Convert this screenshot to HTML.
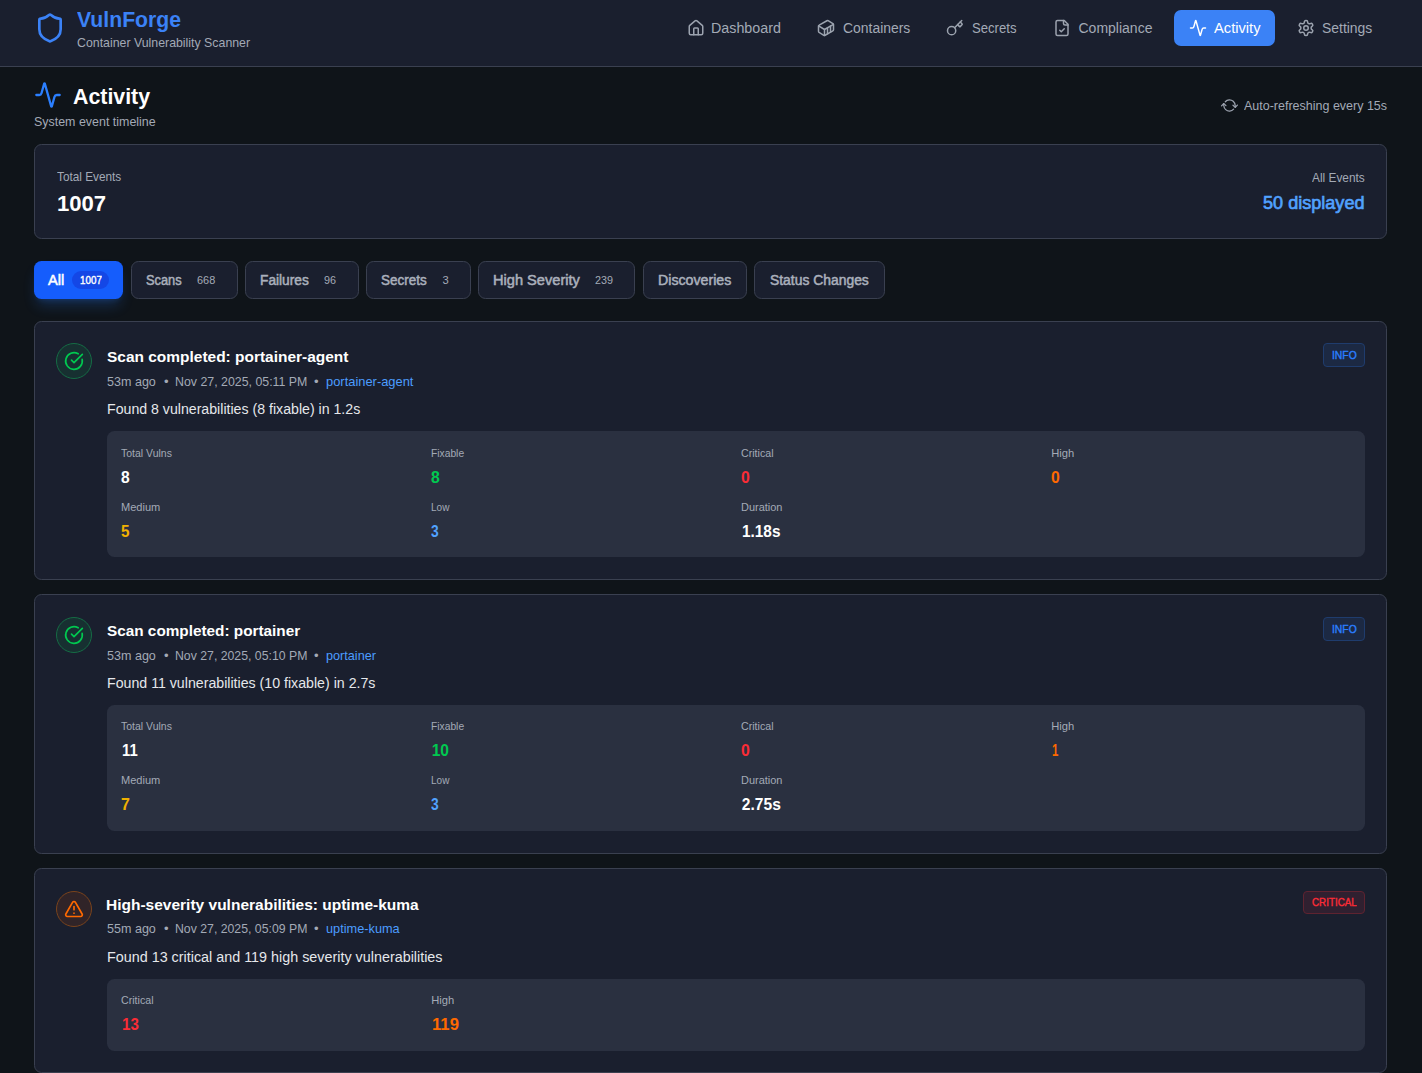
<!DOCTYPE html>
<html lang="en"><head><meta charset="utf-8"><title>VulnForge - Activity</title>
<style>
html,body{margin:0;padding:0}
html{width:1422px;height:1073px;overflow:hidden;background:#0f1419}
body{width:1422px;height:1073px;overflow:hidden;position:relative;background:#0f1419;font-family:"Liberation Sans",sans-serif}
.page{position:absolute;left:0;top:0;width:1422px;height:1073px;overflow:hidden;background:#0f1419}
.b{position:absolute;box-sizing:border-box}
.t{position:absolute;margin:0;padding:0;white-space:pre;line-height:1;font-weight:400;font-style:normal;text-decoration:none;transform-origin:0 0}
.ic{position:absolute;display:block;overflow:visible}
</style></head>
<body>
<div class="page">
<header class="app-header">
<div class="b" style="left:0px;top:0px;width:1422px;height:66px;background:#1a1f2e;border-bottom:1px solid #3a4050;box-sizing:content-box"></div>
<svg class="ic" style="left:34px;top:12px" width="32" height="32" viewBox="0 0 24 24" fill="none" stroke="#3b82f6" stroke-width="2" stroke-linecap="round" stroke-linejoin="round"><path d="M20 13c0 5-3.5 7.5-7.66 8.95a1 1 0 0 1-.67-.01C7.5 20.5 4 18 4 13V6a1 1 0 0 1 1-1c2 0 4.5-1.2 6.24-2.72a1.17 1.17 0 0 1 1.52 0C14.51 3.81 17 5 19 5a1 1 0 0 1 1 1z"/></svg>
<h1 class="t" style="left:77.30px;top:8.60px;font-size:22.4px;color:#3b82f6;font-weight:700;transform:scaleX(0.9468);">VulnForge</h1>
<p class="t" style="left:77.30px;top:36.10px;font-size:13.07px;color:#a3aab6;transform:scaleX(0.9447);">Container Vulnerability Scanner</p>
</header>
<nav class="main-nav">
<div class="b" style="left:1174px;top:10px;width:101px;height:36px;background:#3b82f6;border-radius:7px"></div>
<svg class="ic" style="left:686.7px;top:19px" width="18" height="18" viewBox="0 0 24 24" fill="none" stroke="#9ca3af" stroke-width="2" stroke-linecap="round" stroke-linejoin="round"><path d="M15 21v-8a1 1 0 0 0-1-1h-4a1 1 0 0 0-1 1v8"/><path d="M3 10a2 2 0 0 1 .709-1.528l7-5.999a2 2 0 0 1 2.582 0l7 5.999A2 2 0 0 1 21 10v9a2 2 0 0 1-2 2H5a2 2 0 0 1-2-2z"/></svg>
<svg class="ic" style="left:816.8px;top:19px" width="18" height="18" viewBox="0 0 24 24" fill="none" stroke="#9ca3af" stroke-width="2" stroke-linecap="round" stroke-linejoin="round"><path d="M22 7.7c0-.6-.4-1.2-.8-1.5l-6.3-3.9a1.72 1.72 0 0 0-1.7 0l-10.3 6c-.5.2-.9.8-.9 1.400v6.600c0 .5.4 1.200.8 1.500l6.300 3.900a1.720 1.720 0 0 0 1.700 0l10.300-6c.5-.3.9-1 .9-1.500Z"/><path d="M10 21.900V14L2.100 9.100"/><path d="m10 14 11.900-6.900"/><path d="M14 19.800v-8.100"/><path d="M18 17.500V9.400"/></svg>
<svg class="ic" style="left:946px;top:19px" width="18" height="18" viewBox="0 0 24 24" fill="none" stroke="#9ca3af" stroke-width="2" stroke-linecap="round" stroke-linejoin="round"><path d="m15.500 7.500 2.300 2.300a1 1 0 0 0 1.400 0l2.100-2.100a1 1 0 0 0 0-1.400L19 4"/><path d="m21 2-9.600 9.600"/><circle cx="7.500" cy="15.500" r="5.500"/></svg>
<svg class="ic" style="left:1052.5px;top:19px" width="18" height="18" viewBox="0 0 24 24" fill="none" stroke="#9ca3af" stroke-width="2" stroke-linecap="round" stroke-linejoin="round"><path d="M15 2H6a2 2 0 0 0-2 2v16a2 2 0 0 0 2 2h12a2 2 0 0 0 2-2V7Z"/><path d="M14 2v4a2 2 0 0 0 2 2h4"/><path d="m9 15 2 2 4-4"/></svg>
<svg class="ic" style="left:1189.3px;top:19px" width="18" height="18" viewBox="0 0 24 24" fill="none" stroke="#ffffff" stroke-width="2" stroke-linecap="round" stroke-linejoin="round"><path d="M22 12h-2.480a2 2 0 0 0-1.930 1.460l-2.350 8.360a.25.25 0 0 1-.480 0L9.240 2.180a.25.25 0 0 0-.480 0l-2.350 8.360A2 2 0 0 1 4.490 12H2"/></svg>
<svg class="ic" style="left:1297.4px;top:19px" width="18" height="18" viewBox="0 0 24 24" fill="none" stroke="#9ca3af" stroke-width="2" stroke-linecap="round" stroke-linejoin="round"><path d="M12.220 2h-.440a2 2 0 0 0-2 2v.180a2 2 0 0 1-1 1.730l-.430.250a2 2 0 0 1-2 0l-.150-.080a2 2 0 0 0-2.730.730l-.220.380a2 2 0 0 0 .730 2.730l.150.100a2 2 0 0 1 1 1.720v.510a2 2 0 0 1-1 1.740l-.150.090a2 2 0 0 0-.730 2.730l.220.380a2 2 0 0 0 2.730.730l.150-.080a2 2 0 0 1 2 0l.430.250a2 2 0 0 1 1 1.730V20a2 2 0 0 0 2 2h.440a2 2 0 0 0 2-2v-.180a2 2 0 0 1 1-1.730l.430-.250a2 2 0 0 1 2 0l.150.080a2 2 0 0 0 2.730-.730l.220-.390a2 2 0 0 0-.730-2.730l-.150-.080a2 2 0 0 1-1-1.740v-.500a2 2 0 0 1 1-1.740l.150-.090a2 2 0 0 0 .730-2.730l-.220-.380a2 2 0 0 0-2.730-.730l-.150.080a2 2 0 0 1-2 0l-.430-.250a2 2 0 0 1-1-1.730V4a2 2 0 0 0-2-2z"/><circle cx="12" cy="12" r="3"/></svg>
<a class="t" style="left:711.48px;top:21.20px;font-size:14px;color:#a3aab6;transform:scaleX(1.0209);">Dashboard</a>
<a class="t" style="left:842.70px;top:21.20px;font-size:14px;color:#a3aab6;transform:scaleX(0.9940);">Containers</a>
<a class="t" style="left:971.80px;top:21.20px;font-size:14px;color:#a3aab6;transform:scaleX(0.9376);">Secrets</a>
<a class="t" style="left:1078.50px;top:21.20px;font-size:14px;color:#a3aab6;">Compliance</a>
<a class="t" style="left:1214.30px;top:21.20px;font-size:14px;color:#ffffff;transform:scaleX(1.0488);">Activity</a>
<a class="t" style="left:1322.40px;top:21.20px;font-size:14px;color:#a3aab6;transform:scaleX(0.9943);">Settings</a>
</nav>
<main>
<section class="page-title">
<svg class="ic" style="left:34px;top:81px" width="28" height="28" viewBox="0 0 24 24" fill="none" stroke="#2b7fff" stroke-width="2" stroke-linecap="round" stroke-linejoin="round"><path d="M22 12h-2.480a2 2 0 0 0-1.930 1.460l-2.350 8.360a.25.25 0 0 1-.480 0L9.240 2.180a.25.25 0 0 0-.480 0l-2.350 8.360A2 2 0 0 1 4.490 12H2"/></svg>
<svg class="ic" style="transform:rotate(42deg);left:1221.8px;top:97.8px" width="14.93" height="14.93" viewBox="0 0 24 24" fill="none" stroke="#9ca3af" stroke-width="2" stroke-linecap="round" stroke-linejoin="round"><path d="M3 12a9 9 0 0 1 9-9 9.750 9.750 0 0 1 6.740 2.740L21 8"/><path d="M21 3v5h-5"/><path d="M21 12a9 9 0 0 1-9 9 9.750 9.750 0 0 1-6.740-2.740L3 16"/><path d="M8 16H3v5"/></svg>
<h2 class="t" style="left:73.40px;top:85.90px;font-size:22.4px;color:#ffffff;font-weight:700;transform:scaleX(0.9530);">Activity</h2>
<p class="t" style="left:34.10px;top:115.10px;font-size:13.07px;color:#a3aab6;transform:scaleX(0.9521);">System event timeline</p>
<span class="t" style="left:1243.90px;top:99.40px;font-size:13.07px;color:#a3aab6;transform:scaleX(0.9564);">Auto-refreshing every 15s</span>
</section>
<section class="stats-card">
<div class="b" style="left:34px;top:144px;width:1353px;height:95px;background:#1a1f2e;border:1px solid #3a4050;border-radius:7.5px"></div>
<p class="t" style="left:57.10px;top:170.00px;font-size:13.07px;color:#a3aab6;transform:scaleX(0.9033);">Total Events</p>
<p class="t" style="left:57.01px;top:192.90px;font-size:22.4px;color:#ffffff;font-weight:700;transform:scaleX(0.9864);">1007</p>
<p class="t" style="left:1311.60px;top:171.10px;font-size:13.07px;color:#a3aab6;transform:scaleX(0.9086);">All Events</p>
<p class="t" style="left:1262.83px;top:194.10px;font-size:18.67px;color:#51a2ff;-webkit-text-stroke:0.67px #51a2ff;transform:scaleX(0.9690);">50 displayed</p>
</section>
<section class="filters">
<div class="b" style="left:34px;top:261px;width:89px;height:38px;background:#155dfc;border-radius:7.5px;box-shadow:0 9px 14px -3px rgba(43,127,255,.24),0 4px 6px -4px rgba(43,127,255,.24)"></div>
<div class="b" style="left:72px;top:271px;width:37px;height:18px;background:#1447e6;border-radius:9px"></div>
<div class="b" style="left:131px;top:261px;width:107px;height:38px;background:#1a1f2e;border:1px solid #3a4050;border-radius:7.5px"></div>
<div class="b" style="left:245px;top:261px;width:114px;height:38px;background:#1a1f2e;border:1px solid #3a4050;border-radius:7.5px"></div>
<div class="b" style="left:366px;top:261px;width:105px;height:38px;background:#1a1f2e;border:1px solid #3a4050;border-radius:7.5px"></div>
<div class="b" style="left:478px;top:261px;width:157px;height:38px;background:#1a1f2e;border:1px solid #3a4050;border-radius:7.5px"></div>
<div class="b" style="left:643px;top:261px;width:104px;height:38px;background:#1a1f2e;border:1px solid #3a4050;border-radius:7.5px"></div>
<div class="b" style="left:754px;top:261px;width:131px;height:38px;background:#1a1f2e;border:1px solid #3a4050;border-radius:7.5px"></div>
<span class="t" style="left:48.46px;top:273.70px;font-size:13.8px;color:#ffffff;-webkit-text-stroke:0.50px #ffffff;transform:scaleX(1.0593);">All</span>
<span class="t" style="left:80.08px;top:275.00px;font-size:11.2px;color:#ffffff;-webkit-text-stroke:0.40px #ffffff;transform:scaleX(0.8776);">1007</span>
<span class="t" style="left:146.43px;top:273.70px;font-size:13.8px;color:#aab0bc;-webkit-text-stroke:0.50px #aab0bc;transform:scaleX(0.9295);">Scans</span>
<span class="t" style="left:197.10px;top:275.00px;font-size:11.2px;color:#a3aab6;transform:scaleX(0.9759);">668</span>
<span class="t" style="left:259.85px;top:273.70px;font-size:13.8px;color:#aab0bc;-webkit-text-stroke:0.50px #aab0bc;transform:scaleX(0.9945);">Failures</span>
<span class="t" style="left:324.20px;top:275.00px;font-size:11.2px;color:#a3aab6;transform:scaleX(0.9655);">96</span>
<span class="t" style="left:381.24px;top:273.70px;font-size:13.8px;color:#aab0bc;-webkit-text-stroke:0.50px #aab0bc;transform:scaleX(0.9753);">Secrets</span>
<span class="t" style="left:442.40px;top:275.00px;font-size:11.2px;color:#a3aab6;">3</span>
<span class="t" style="left:493.10px;top:273.70px;font-size:13.8px;color:#aab0bc;-webkit-text-stroke:0.50px #aab0bc;transform:scaleX(1.0595);">High Severity</span>
<span class="t" style="left:594.90px;top:275.00px;font-size:11.2px;color:#a3aab6;transform:scaleX(0.9651);">239</span>
<span class="t" style="left:657.63px;top:273.70px;font-size:13.8px;color:#aab0bc;-webkit-text-stroke:0.50px #aab0bc;transform:scaleX(1.0282);">Discoveries</span>
<span class="t" style="left:769.95px;top:273.70px;font-size:13.8px;color:#aab0bc;-webkit-text-stroke:0.50px #aab0bc;transform:scaleX(1.0063);">Status Changes</span>
</section>
<article class="event">
<div class="b" style="left:34px;top:321px;width:1353px;height:259px;background:#1a1f2e;border:1px solid #3a4050;border-radius:7.5px"></div>
<div class="b" style="left:56px;top:343px;width:36px;height:36px;background:#173031;border:1px solid #156c45;border-radius:50%"></div>
<div class="b" style="left:107px;top:431px;width:1258px;height:126px;background:#2a3040;border-radius:7.5px"></div>
<div class="b" style="left:1323px;top:343px;width:42px;height:24px;background:#1c2943;border:1px solid #1f3c6d;border-radius:4px"></div>
<svg class="ic" style="left:64px;top:351px" width="20" height="20" viewBox="0 0 24 24" fill="none" stroke="#00c950" stroke-width="2" stroke-linecap="round" stroke-linejoin="round"><path d="M21.801 10A10 10 0 1 1 17 3.335"/><path d="m9 11 3 3L22 4"/></svg>
<h3 class="t" style="left:107.10px;top:350.00px;font-size:14.93px;color:#ffffff;font-weight:700;transform:scaleX(1.0364);">Scan completed: portainer-agent</h3>
<span class="t" style="left:107.10px;top:375.30px;font-size:13.07px;color:#a3aab6;transform:scaleX(0.9611);">53m ago</span>
<span class="t" style="left:163.90px;top:375.30px;font-size:13.07px;color:#a3aab6;">•</span>
<span class="t" style="left:174.75px;top:375.30px;font-size:13.07px;color:#a3aab6;transform:scaleX(0.9462);">Nov 27, 2025, 05:11 PM</span>
<span class="t" style="left:314.10px;top:375.30px;font-size:13.07px;color:#a3aab6;">•</span>
<a class="t" style="left:326.10px;top:375.30px;font-size:13.07px;color:#4c9dff;transform:scaleX(0.9869);">portainer-agent</a>
<p class="t" style="left:106.79px;top:401.90px;font-size:14px;color:#e5e7eb;transform:scaleX(1.0105);">Found 8 vulnerabilities (8 fixable) in 1.2s</p>
<span class="t" style="left:1331.86px;top:350.00px;font-size:11.2px;color:#2b7fff;-webkit-text-stroke:0.40px #2b7fff;transform:scaleX(0.9234);">INFO</span>
<span class="t" style="left:121.20px;top:448.00px;font-size:11.2px;color:#a3aab6;transform:scaleX(0.9376);">Total Vulns</span>
<span class="t" style="left:121.00px;top:470.00px;font-size:15.6px;color:#ffffff;font-weight:700;">8</span>
<span class="t" style="left:431.20px;top:448.00px;font-size:11.2px;color:#a3aab6;transform:scaleX(0.9179);">Fixable</span>
<span class="t" style="left:431.20px;top:470.00px;font-size:15.6px;color:#00c950;font-weight:700;transform:scaleX(1.0111);">8</span>
<span class="t" style="left:741.20px;top:448.00px;font-size:11.2px;color:#a3aab6;transform:scaleX(0.9525);">Critical</span>
<span class="t" style="left:741.20px;top:470.00px;font-size:15.6px;color:#fb2c36;font-weight:700;transform:scaleX(1.0111);">0</span>
<span class="t" style="left:1051.20px;top:448.00px;font-size:11.2px;color:#a3aab6;">High</span>
<span class="t" style="left:1051.20px;top:470.00px;font-size:15.6px;color:#ff6900;font-weight:700;transform:scaleX(1.0111);">0</span>
<span class="t" style="left:121.20px;top:502.00px;font-size:11.2px;color:#a3aab6;transform:scaleX(0.9881);">Medium</span>
<span class="t" style="left:121.20px;top:524.00px;font-size:15.6px;color:#f0b100;font-weight:700;transform:scaleX(0.9778);">5</span>
<span class="t" style="left:431.20px;top:502.00px;font-size:11.2px;color:#a3aab6;transform:scaleX(0.8954);">Low</span>
<span class="t" style="left:431.20px;top:524.00px;font-size:15.6px;color:#51a2ff;font-weight:700;transform:scaleX(0.8889);">3</span>
<span class="t" style="left:741.20px;top:502.00px;font-size:11.2px;color:#a3aab6;transform:scaleX(0.9795);">Duration</span>
<span class="t" style="left:741.80px;top:524.00px;font-size:15.6px;color:#ffffff;font-weight:700;transform:scaleX(0.9860);">1.18s</span>
</article>
<article class="event">
<div class="b" style="left:34px;top:594px;width:1353px;height:260px;background:#1a1f2e;border:1px solid #3a4050;border-radius:7.5px"></div>
<div class="b" style="left:56px;top:617px;width:36px;height:36px;background:#173031;border:1px solid #156c45;border-radius:50%"></div>
<div class="b" style="left:107px;top:705px;width:1258px;height:126px;background:#2a3040;border-radius:7.5px"></div>
<div class="b" style="left:1323px;top:617px;width:42px;height:24px;background:#1c2943;border:1px solid #1f3c6d;border-radius:4px"></div>
<svg class="ic" style="left:64px;top:625px" width="20" height="20" viewBox="0 0 24 24" fill="none" stroke="#00c950" stroke-width="2" stroke-linecap="round" stroke-linejoin="round"><path d="M21.801 10A10 10 0 1 1 17 3.335"/><path d="m9 11 3 3L22 4"/></svg>
<h3 class="t" style="left:107.10px;top:623.80px;font-size:14.93px;color:#ffffff;font-weight:700;transform:scaleX(1.0265);">Scan completed: portainer</h3>
<span class="t" style="left:107.10px;top:649.10px;font-size:13.07px;color:#a3aab6;transform:scaleX(0.9611);">53m ago</span>
<span class="t" style="left:163.90px;top:649.10px;font-size:13.07px;color:#a3aab6;">•</span>
<span class="t" style="left:174.76px;top:649.10px;font-size:13.07px;color:#a3aab6;transform:scaleX(0.9396);">Nov 27, 2025, 05:10 PM</span>
<span class="t" style="left:314.10px;top:649.10px;font-size:13.07px;color:#a3aab6;">•</span>
<a class="t" style="left:326.10px;top:649.10px;font-size:13.07px;color:#4c9dff;transform:scaleX(0.9693);">portainer</a>
<p class="t" style="left:106.79px;top:676.00px;font-size:14px;color:#e5e7eb;transform:scaleX(1.0125);">Found 11 vulnerabilities (10 fixable) in 2.7s</p>
<span class="t" style="left:1331.86px;top:624.00px;font-size:11.2px;color:#2b7fff;-webkit-text-stroke:0.40px #2b7fff;transform:scaleX(0.9234);">INFO</span>
<span class="t" style="left:121.20px;top:721.00px;font-size:11.2px;color:#a3aab6;transform:scaleX(0.9376);">Total Vulns</span>
<span class="t" style="left:121.80px;top:743.00px;font-size:15.6px;color:#ffffff;font-weight:700;transform:scaleX(0.9517);">11</span>
<span class="t" style="left:431.20px;top:721.00px;font-size:11.2px;color:#a3aab6;transform:scaleX(0.9179);">Fixable</span>
<span class="t" style="left:431.70px;top:743.00px;font-size:15.6px;color:#00c950;font-weight:700;">10</span>
<span class="t" style="left:741.20px;top:721.00px;font-size:11.2px;color:#a3aab6;transform:scaleX(0.9525);">Critical</span>
<span class="t" style="left:741.20px;top:743.00px;font-size:15.6px;color:#fb2c36;font-weight:700;transform:scaleX(1.0111);">0</span>
<span class="t" style="left:1051.20px;top:721.00px;font-size:11.2px;color:#a3aab6;">High</span>
<span class="t" style="left:1051.70px;top:743.00px;font-size:15.6px;color:#ff6900;font-weight:700;transform:scaleX(0.7333);">1</span>
<span class="t" style="left:121.20px;top:775.00px;font-size:11.2px;color:#a3aab6;transform:scaleX(0.9881);">Medium</span>
<span class="t" style="left:121.20px;top:797.00px;font-size:15.6px;color:#f0b100;font-weight:700;transform:scaleX(1.0250);">7</span>
<span class="t" style="left:431.20px;top:775.00px;font-size:11.2px;color:#a3aab6;transform:scaleX(0.8954);">Low</span>
<span class="t" style="left:431.20px;top:797.00px;font-size:15.6px;color:#51a2ff;font-weight:700;transform:scaleX(0.8889);">3</span>
<span class="t" style="left:741.20px;top:775.00px;font-size:11.2px;color:#a3aab6;transform:scaleX(0.9795);">Duration</span>
<span class="t" style="left:741.80px;top:797.00px;font-size:15.6px;color:#ffffff;font-weight:700;">2.75s</span>
</article>
<article class="event">
<div class="b" style="left:34px;top:868px;width:1353px;height:205px;background:#1a1f2e;border:1px solid #3a4050;border-radius:7.5px"></div>
<div class="b" style="left:56px;top:891px;width:36px;height:36px;background:#302428;border:1px solid #7a431c;border-radius:50%"></div>
<div class="b" style="left:107px;top:979px;width:1258px;height:72px;background:#2a3040;border-radius:7.5px"></div>
<div class="b" style="left:1303px;top:891px;width:62px;height:23px;background:#302030;border:1px solid #5e2330;border-radius:4px"></div>
<svg class="ic" style="left:64px;top:899px" width="20" height="20" viewBox="0 0 24 24" fill="none" stroke="#ff6900" stroke-width="2" stroke-linecap="round" stroke-linejoin="round"><path d="m21.730 18-8-14a2 2 0 0 0-3.480 0l-8 14A2 2 0 0 0 4 21h16a2 2 0 0 0 1.730-3"/><path d="M12 9v4"/><path d="M12 17h.010"/></svg>
<h3 class="t" style="left:106.06px;top:898.00px;font-size:14.93px;color:#ffffff;font-weight:700;transform:scaleX(1.0389);">High-severity vulnerabilities: uptime-kuma</h3>
<span class="t" style="left:107.10px;top:922.30px;font-size:13.07px;color:#a3aab6;transform:scaleX(0.9611);">55m ago</span>
<span class="t" style="left:163.90px;top:922.30px;font-size:13.07px;color:#a3aab6;">•</span>
<span class="t" style="left:174.76px;top:922.30px;font-size:13.07px;color:#a3aab6;transform:scaleX(0.9396);">Nov 27, 2025, 05:09 PM</span>
<span class="t" style="left:314.10px;top:922.30px;font-size:13.07px;color:#a3aab6;">•</span>
<a class="t" style="left:326.10px;top:922.30px;font-size:13.07px;color:#4c9dff;transform:scaleX(0.9759);">uptime-kuma</a>
<p class="t" style="left:106.78px;top:950.00px;font-size:14px;color:#e5e7eb;transform:scaleX(1.0249);">Found 13 critical and 119 high severity vulnerabilities</p>
<span class="t" style="left:1312.28px;top:897.30px;font-size:11.2px;color:#fb2c36;-webkit-text-stroke:0.40px #fb2c36;transform:scaleX(0.8778);">CRITICAL</span>
<span class="t" style="left:121.20px;top:995.00px;font-size:11.2px;color:#a3aab6;transform:scaleX(0.9525);">Critical</span>
<span class="t" style="left:122.00px;top:1017.00px;font-size:15.6px;color:#fb2c36;font-weight:700;transform:scaleX(0.9676);">13</span>
<span class="t" style="left:431.20px;top:995.00px;font-size:11.2px;color:#a3aab6;">High</span>
<span class="t" style="left:432.00px;top:1017.00px;font-size:15.6px;color:#ff6900;font-weight:700;transform:scaleX(1.0712);">119</span>
</article>
</main>
</div>
</body></html>
